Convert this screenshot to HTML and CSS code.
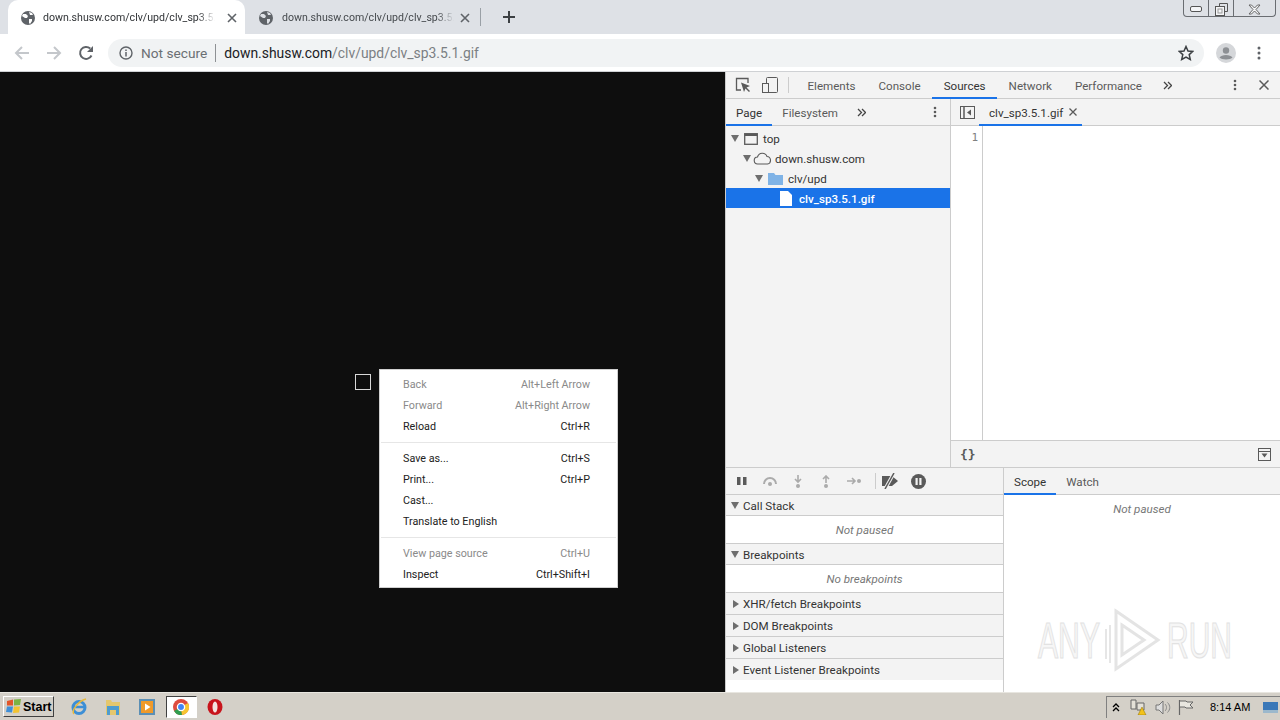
FILE: index.html
```html
<!DOCTYPE html>
<html lang="en">
<head>
    <meta charset="UTF-8">
    <title>clv_sp3.5.1.gif</title>
    <link rel="stylesheet" href="styles.css">
</head>
<body>

<div class="tabstrip">
    <div class="tab tab-active">
        <svg class="globe" width="14" height="14" viewBox="0 0 14 14"><circle cx="7" cy="7" r="7" fill="#5f6368"/><path d="M2 3l3 0 2 2-1 2-2 0-3-2zM8 8l3 0 0 2-2 3-1-1zM8 1l3 1 1 2-3 0z" fill="#fff"/></svg>
        <span class="tab-title">down.shusw.com/clv/upd/clv_sp3.5.1.gif</span>
        <svg class="tab-close" width="10" height="10" viewBox="0 0 10 10"><path d="M1 1l8 8M9 1l-8 8" stroke="#5f6368" stroke-width="1.6"/></svg>
    </div>
    <div class="tab">
        <svg class="globe" width="14" height="14" viewBox="0 0 14 14"><circle cx="7" cy="7" r="7" fill="#5f6368"/><path d="M2 3l3 0 2 2-1 2-2 0-3-2zM8 8l3 0 0 2-2 3-1-1zM8 1l3 1 1 2-3 0z" fill="#dee1e6"/></svg>
        <span class="tab-title">down.shusw.com/clv/upd/clv_sp3.5.1.gif</span>
        <svg class="tab-close" width="10" height="10" viewBox="0 0 10 10"><path d="M1 1l8 8M9 1l-8 8" stroke="#5f6368" stroke-width="1.6"/></svg>
    </div>
    <div class="tab-sep"></div>
    <svg class="new-tab" width="12" height="12" viewBox="0 0 12 12"><path d="M6 0v12M0 6h12" stroke="#3c4043" stroke-width="2"/></svg>
    <div class="win-controls">
        <div class="win-btn win-min"><svg width="12" height="7" viewBox="0 0 12 7"><rect x=".5" y=".5" width="11" height="5" rx="1.5" fill="#f4f5f7" stroke="#555"/></svg></div>
        <div class="win-btn win-max"><svg width="13" height="13" viewBox="0 0 13 13"><path d="M4.500 3V.5h8v8H10" fill="none" stroke="#555"/><rect x=".5" y="3.500" width="9" height="9" fill="#f4f5f7" stroke="#555"/><rect x="3" y="6" width="4" height="4" fill="none" stroke="#999"/></svg></div>
        <div class="win-btn win-close"><svg width="13" height="11" viewBox="0 0 13 11"><path d="M1 1h2.500l3 3 3-3H12L8 5.500l4 4.500H9.500l-3-3-3 3H1l4-4.500z" fill="#f4f5f7" stroke="#666"/></svg></div>
    </div>
</div>

<div class="toolbar">
    <svg class="tool-icon" width="16" height="16" viewBox="0 0 16 16"><path d="M15 8H2M8 2L2 8l6 6" fill="none" stroke="#c4c7cb" stroke-width="2"/></svg>
    <svg class="tool-icon" width="16" height="16" viewBox="0 0 16 16"><path d="M1 8h13M8 2l6 6-6 6" fill="none" stroke="#c4c7cb" stroke-width="2"/></svg>
    <svg class="tool-icon" width="16" height="16" viewBox="0 0 16 16"><path d="M13.500 10.500A6 6 0 1 1 12.200 3.500" fill="none" stroke="#5f6368" stroke-width="2"/><path d="M15 1v6H9z" fill="#5f6368"/></svg>
    <div class="omnibox">
        <svg class="info-icon" width="14" height="14" viewBox="0 0 14 14"><circle cx="7" cy="7" r="6" fill="none" stroke="#5f6368" stroke-width="1.400"/><path d="M7 6v4.500M7 3.500v1.500" stroke="#5f6368" stroke-width="1.500"/></svg>
        <span class="not-secure">Not secure</span>
        <span class="omni-sep"></span>
        <span class="url"><span class="url-host">down.shusw.com</span>/clv/upd/clv_sp3.5.1.gif</span>
        <svg class="star" width="16" height="16" viewBox="0 0 16 16"><path d="M8 1.500l2 4.500 4.800.4-3.600 3.200 1.100 4.800L8 12l-4.300 2.400 1.100-4.800L1.200 6.400 6 6z" fill="none" stroke="#3c4043" stroke-width="1.500"/></svg>
    </div>
    <svg class="avatar" width="20" height="20" viewBox="0 0 20 20"><circle cx="10" cy="10" r="10" fill="#d5d7da"/><circle cx="10" cy="7.500" r="3.200" fill="#8d9094"/><path d="M3.500 14.500c2-3.500 11-3.500 13 0-2 2.500-11 2.500-13 0z" fill="#8d9094"/></svg>
    <svg class="menu-dots" width="4" height="14" viewBox="0 0 4 14"><circle cx="2" cy="2" r="1.500" fill="#5f6368"/><circle cx="2" cy="7" r="1.500" fill="#5f6368"/><circle cx="2" cy="12" r="1.500" fill="#5f6368"/></svg>
</div>

<div class="main">
    <div class="viewer">
        <div class="broken-image"></div>
    </div>

    <div class="devtools">
        <div class="dt-mainbar">
            <svg class="dt-inspect" width="16" height="16" viewBox="0 0 16 16"><path d="M6 13H1.500V1.500H13V6" fill="none" stroke="#5a5a5a" stroke-width="1.300"/><path d="M6 5.500l9 3.500-3.500 1.500L15 14l-1 1-3.500-3.500L9 15z" fill="#5a5a5a"/></svg>
            <svg class="dt-device" width="16" height="16" viewBox="0 0 16 16"><rect x="4.500" y=".5" width="11" height="15" fill="none" stroke="#5a5a5a" rx="1"/><rect x=".5" y="6.500" width="6" height="9" fill="#f3f3f3" stroke="#5a5a5a"/></svg>
            <span class="dt-vsep"></span>
            <div class="dt-tabs">
                <span class="dt-tab">Elements</span>
                <span class="dt-tab">Console</span>
                <span class="dt-tab dt-tab-on">Sources</span>
                <span class="dt-tab">Network</span>
                <span class="dt-tab">Performance</span>
            </div>
            <svg class="chevrons" width="9" height="9" viewBox="0 0 9 9"><path d="M1 1l3.500 3.500L1 8M5 1l3.500 3.500L5 8" fill="none" stroke="#444" stroke-width="1.300"/></svg>
            <svg class="dt-kebab" width="4" height="12" viewBox="0 0 4 12"><circle cx="2" cy="2" r="1.300" fill="#5a5a5a"/><circle cx="2" cy="6" r="1.300" fill="#5a5a5a"/><circle cx="2" cy="10" r="1.300" fill="#5a5a5a"/></svg>
            <svg class="dt-close" width="10" height="10" viewBox="0 0 10 10"><path d="M.5.5l9 9M9.500.5l-9 9" stroke="#5a5a5a" stroke-width="1.500"/></svg>
        </div>

        <div class="dt-upper">
            <div class="navigator">
                <div class="subbar">
                    <span class="sub-tab sub-tab-on">Page</span>
                    <span class="sub-tab">Filesystem</span>
                    <svg class="chevrons" width="9" height="9" viewBox="0 0 9 9"><path d="M1 1l3.500 3.500L1 8M5 1l3.500 3.500L5 8" fill="none" stroke="#444" stroke-width="1.300"/></svg>
                    <svg class="nav-kebab" width="4" height="12" viewBox="0 0 4 12"><circle cx="2" cy="2" r="1.300" fill="#5a5a5a"/><circle cx="2" cy="6" r="1.300" fill="#5a5a5a"/><circle cx="2" cy="10" r="1.300" fill="#5a5a5a"/></svg>
                </div>
                <div class="tree">
                    <div class="tree-row">
                        <span class="arrow-down"></span>
                        <svg width="14" height="12" viewBox="0 0 14 12"><rect x=".7" y=".7" width="12.600" height="10.600" fill="none" stroke="#5a5a5a" stroke-width="1.300"/><path d="M.7 2h12.600" stroke="#5a5a5a" stroke-width="2"/></svg>
                        <span>top</span>
                    </div>
                    <div class="tree-row depth-1">
                        <span class="arrow-down"></span>
                        <svg class="cloud" width="20" height="13" viewBox="0 0 20 13"><path d="M5 12a3.500 3.500 0 0 1-.5-7 5 5 0 0 1 9.500-.5 3.800 3.800 0 0 1 .5 7.500z" fill="none" stroke="#5a5a5a" stroke-width="1.100"/></svg>
                        <span>down.shusw.com</span>
                    </div>
                    <div class="tree-row depth-2">
                        <span class="arrow-down"></span>
                        <svg class="folder" width="15" height="12" viewBox="0 0 15 12"><path d="M0 0h6l1.500 2H15v10H0z" fill="#7fb3e6"/></svg>
                        <span>clv/upd</span>
                    </div>
                    <div class="tree-row depth-3 tree-row-on">
                        <svg width="12" height="15" viewBox="0 0 12 15"><path d="M0 0h8l4 4v11H0z" fill="#fff"/></svg>
                        <span>clv_sp3.5.1.gif</span>
                    </div>
                </div>
            </div>
            <div class="editor">
                <div class="subbar editor-bar">
                    <svg class="panel-toggle" width="15" height="13" viewBox="0 0 15 13"><rect x=".5" y=".5" width="14" height="12" fill="none" stroke="#5a5a5a"/><path d="M4 0v13" stroke="#5a5a5a" stroke-width="1.500"/><path d="M11 3.500v6L7 6.500z" fill="#5a5a5a"/></svg>
                    <span class="file-tab">clv_sp3.5.1.gif<svg width="8" height="8" viewBox="0 0 8 8"><path d="M.5.5l7 7M7.500.5l-7 7" stroke="#5a5a5a" stroke-width="1.300"/></svg></span>
                </div>
                <div class="code">
                    <div class="gutter">1</div>
                </div>
                <div class="editor-foot">
                    <span class="pretty">{}</span>
                    <svg width="13" height="13" viewBox="0 0 13 13"><rect x=".5" y=".5" width="12" height="12" fill="none" stroke="#5a5a5a"/><path d="M1 3.500h11" stroke="#5a5a5a"/><path d="M3.500 5.500h6l-3 4z" fill="#5a5a5a"/></svg>
                </div>
            </div>
        </div>

        <div class="dt-lower">
            <div class="debug-left">
                <div class="debug-tools">
                    <span class="dbg-btn"><svg width="10" height="10" viewBox="0 0 10 10"><path d="M0 1h3.500v8H0zM6 1h3.500v8H6z" fill="#5a5a5a"/></svg></span>
                    <span class="dbg-btn"><svg width="16" height="10" viewBox="0 0 16 10"><path d="M2 8a6 6 0 0 1 12 0" fill="none" stroke="#ababab" stroke-width="2"/><circle cx="8" cy="8" r="2" fill="#ababab"/></svg></span>
                    <span class="dbg-btn"><svg width="8" height="13" viewBox="0 0 8 13"><path d="M4 0v6M1 4l3 3 3-3" fill="none" stroke="#ababab" stroke-width="1.600"/><circle cx="4" cy="11" r="2" fill="#ababab"/></svg></span>
                    <span class="dbg-btn"><svg width="8" height="13" viewBox="0 0 8 13"><path d="M4 8V2M1 4l3-3 3 3" fill="none" stroke="#ababab" stroke-width="1.600"/><circle cx="4" cy="11" r="2" fill="#ababab"/></svg></span>
                    <span class="dbg-btn"><svg width="14" height="8" viewBox="0 0 14 8"><path d="M0 4h7M5 1l3 3-3 3" fill="none" stroke="#ababab" stroke-width="1.600"/><circle cx="12" cy="4" r="2" fill="#ababab"/></svg></span>
                    <span class="dt-vsep"></span>
                    <span class="dbg-btn"><svg width="18" height="16" viewBox="0 0 18 16"><path d="M1 3h10l6 5-6 5H1z" fill="#5a5a5a"/><path d="M13 0L4 16" stroke="#f3f3f3" stroke-width="3.500"/><path d="M13 0L4 16" stroke="#5a5a5a" stroke-width="1.500"/></svg></span>
                    <span class="dbg-btn"><svg width="15" height="15" viewBox="0 0 15 15"><circle cx="7.500" cy="7.500" r="7.500" fill="#5a5a5a"/><path d="M4.500 4h2.200v7H4.500zM8.300 4h2.200v7H8.300z" fill="#f3f3f3"/></svg></span>
                </div>
                <div class="section-head"><span class="arrow-down"></span>Call Stack</div>
                <div class="section-note">Not paused</div>
                <div class="section-head"><span class="arrow-down"></span>Breakpoints</div>
                <div class="section-note">No breakpoints</div>
                <div class="section-head section-closed"><span class="arrow-right"></span>XHR/fetch Breakpoints</div>
                <div class="section-head section-closed"><span class="arrow-right"></span>DOM Breakpoints</div>
                <div class="section-head section-closed"><span class="arrow-right"></span>Global Listeners</div>
                <div class="section-head section-closed"><span class="arrow-right"></span>Event Listener Breakpoints</div>
            </div>
            <div class="debug-right">
                <div class="subbar scope-bar">
                    <span class="sub-tab sub-tab-on">Scope</span>
                    <span class="sub-tab">Watch</span>
                </div>
                <div class="scope-note">Not paused</div>
            </div>
        </div>
    </div>
</div>

<div class="context-menu">
    <div class="menu-row menu-off"><span>Back</span><span>Alt+Left Arrow</span></div>
    <div class="menu-row menu-off"><span>Forward</span><span>Alt+Right Arrow</span></div>
    <div class="menu-row"><span>Reload</span><span>Ctrl+R</span></div>
    <div class="menu-sep"></div>
    <div class="menu-row"><span>Save as...</span><span>Ctrl+S</span></div>
    <div class="menu-row"><span>Print...</span><span>Ctrl+P</span></div>
    <div class="menu-row"><span>Cast...</span></div>
    <div class="menu-row"><span>Translate to English</span></div>
    <div class="menu-sep"></div>
    <div class="menu-row menu-off"><span>View page source</span><span>Ctrl+U</span></div>
    <div class="menu-row"><span>Inspect</span><span>Ctrl+Shift+I</span></div>
</div>

<svg class="watermark" width="210" height="66" viewBox="0 0 210 66">
    <text x="1" y="51" class="wm-text" textLength="62" lengthAdjust="spacingAndGlyphs">ANY</text>
    <path d="M69 22v30M73 18v38" stroke="#e6e6e6" stroke-width="2" fill="none"/>
    <path d="M79 4l42 29-42 29zM85 18l22 15-22 15z" fill="none" stroke="#e4e4e4" stroke-width="3"/>
    <text x="130" y="51" class="wm-text" textLength="65" lengthAdjust="spacingAndGlyphs">RUN</text>
</svg>

<div class="taskbar">
    <div class="start-btn">
        <svg width="16" height="15" viewBox="0 0 16 15"><path d="M1 2l6-1.500v6L1 6.500z" fill="#e2562a"/><path d="M8 .5L15 0l-1 6-6 .5z" fill="#7cb342"/><path d="M1 7.500l6 0-1 6-6-.5z" fill="#3f8fd8"/><path d="M8 7.500l6 0-1 6-6 .5z" fill="#f3c32f"/></svg>
        <span>Start</span>
    </div>
    <div class="quick">
        <span class="quick-slot"><svg width="18" height="18" viewBox="0 0 18 18"><circle cx="9" cy="9.500" r="6" fill="none" stroke="#3d8fd6" stroke-width="3"/><path d="M3 9h12" stroke="#3d8fd6" stroke-width="2.500"/><path d="M4 16C1 13 8 3 16 1" fill="none" stroke="#e8b93c" stroke-width="1.500"/></svg></span>
        <span class="quick-slot"><svg width="18" height="16" viewBox="0 0 18 16"><path d="M2 1h5l1 2h8v13H2z" fill="#e5c76d"/><path d="M3 7h12v9h-3v-5H6v5H3z" fill="#4f9ccf"/></svg></span>
        <span class="quick-slot"><svg width="16" height="16" viewBox="0 0 16 16"><rect width="16" height="16" fill="#5b8fb5"/><rect x="2" y="2" width="12" height="12" fill="#f09a2a"/><path d="M6 4.500l5.500 3.500L6 11.500z" fill="#fff"/></svg></span>
        <span class="quick-slot"><span class="quick-on"><svg width="16" height="16" viewBox="0 0 16 16"><circle cx="8" cy="8" r="8" fill="#dd4b3e"/><path d="M8 8L1 12A8 8 0 0 0 9 16z" fill="#2f9e4f"/><path d="M8 8l7-4a8 8 0 0 1-6 12z" fill="#f7c531"/><circle cx="8" cy="8" r="3.600" fill="#4285f4" stroke="#fff" stroke-width="1.300"/></svg></span></span>
        <span class="quick-slot"><svg width="16" height="18" viewBox="0 0 16 18"><ellipse cx="8" cy="9" rx="7.500" ry="8" fill="#c8141c"/><ellipse cx="8" cy="9" rx="2.500" ry="5.500" fill="#f3e4e0"/></svg></span>
    </div>
    <div class="tray">
        <span class="tray-up">
            <svg width="8" height="9" viewBox="0 0 8 9"><path d="M1 4l3-3 3 3M1 8l3-3 3 3" fill="none" stroke="#000" stroke-width="1.300"/></svg>
        </span>
        <svg class="tray-net" width="18" height="16" viewBox="0 0 18 16"><path d="M1 1h5v9H1zM7 4h7v7H7z" fill="#e4e1d8" stroke="#666"/><path d="M8 16l4-8 4 8z" fill="#f2c21b" stroke="#8a6d00" stroke-width=".5"/></svg>
        <svg width="16" height="15" viewBox="0 0 16 15"><path d="M1 5h3l4-4v13l-4-4H1z" fill="#ddd" stroke="#777"/><path d="M10 4c2 2 2 5 0 7M12.500 2.500c3 3 3 7 0 10" fill="none" stroke="#888"/></svg>
        <svg width="16" height="16" viewBox="0 0 16 16"><path d="M1.500 1v15" stroke="#666" stroke-width="1.200"/><path d="M2 2h6l1 1h6l-3 3 3 3H8L7 8H2" fill="#e8e6df" stroke="#666"/></svg>
        <span class="clock">8:14 AM</span>
        <svg class="show-desktop" width="15" height="11" viewBox="0 0 15 11"><rect width="15" height="11" fill="#3a78b8"/><rect y="8" width="15" height="3" fill="#9cb8cc"/></svg>
    </div>
</div>

</body>
</html>
```

FILE: styles.css
```css
* {
    box-sizing: border-box;
}
body {
    margin: 0;
    width: 1280px;
    height: 720px;
    overflow: hidden;
    position: relative;
    font-family: Roboto, "Open Sans", sans-serif;
    font-size: 11.600px;
    color: #333;
    display: flex;
    flex-direction: column;
    background: #fff;
}

/* browser tabs */
.tabstrip {
    height: 34px;
    flex: none;
    background: #dee1e6;
    display: flex;
    align-items: stretch;
    padding-left: 8px;
}
.tab {
    width: 237px;
    display: flex;
    align-items: center;
    padding-left: 13px;
    padding-top: 1px;
    color: #45494d;
}
.tab-active {
    background: #fff;
    border-radius: 10px 10px 0 0;
    color: #303336;
}
.tab + .tab {
    width: 235px;
    padding-left: 14px;
}
.tab-title {
    width: 172px;
    flex: none;
    margin-left: 8px;
    margin-right: 12px;
    white-space: nowrap;
    overflow: hidden;
    font-size: 10.600px;
    -webkit-mask-image: linear-gradient(to right, #000 90%, transparent);
    mask-image: linear-gradient(to right, #000 90%, transparent);
}
.tab + .tab .tab-title {
    margin-left: 9px;
    margin-right: 6px;
}
.tab-sep {
    width: 1px;
    height: 18px;
    background: #9aa0a6;
    align-self: center;
}
.new-tab {
    align-self: center;
    margin-left: 22px;
}
.win-controls {
    margin-left: auto;
    margin-right: 4px;
    height: 17px;
    width: 93px;
    display: flex;
    border: 1px solid #6a6d72;
    border-top: 0;
    border-radius: 0 0 4px 4px;
}
.win-btn {
    display: flex;
    align-items: center;
    justify-content: center;
    border-right: 1px solid #6a6d72;
    padding-top: 2px;
}
.win-min, .win-max {
    width: 25px;
}
.win-close {
    flex: 1;
    border-right: 0;
}

/* address bar */
.toolbar {
    height: 38px;
    flex: none;
    display: flex;
    align-items: center;
    padding-left: 14px;
    gap: 16px;
    background: #fff;
    border-bottom: 1px solid #cfd1d4;
}
.omnibox {
    width: 1096px;
    height: 28px;
    margin-left: -2px;
    border-radius: 14px;
    background: #f1f3f4;
    display: flex;
    align-items: center;
    padding-left: 11px;
    padding-right: 10px;
}
.not-secure {
    margin-left: 8px;
    font-size: 13.700px;
    color: #6b6f73;
}
.omni-sep {
    width: 1px;
    height: 18px;
    background: #8e9194;
    margin: 0 8px;
}
.url {
    font-size: 13.900px;
    color: #7b7f83;
    white-space: nowrap;
}
.url-host {
    color: #202124;
}
.star {
    margin-left: auto;
}
.avatar {
    margin-left: -4px;
}
.menu-dots {
    margin-left: 5px;
}

/* page area */
.main {
    flex: 1;
    min-height: 0;
    display: flex;
}
.viewer {
    width: 725px;
    background: #0e0e0e;
    display: flex;
    align-items: center;
    justify-content: center;
}
.broken-image {
    width: 16px;
    height: 16px;
    border: 1px solid #d8d8d8;
}

/* devtools */
.devtools {
    flex: 1;
    display: flex;
    flex-direction: column;
    border-left: 1px solid #ccc;
    background: #fff;
    color: #5a5a5a;
}
.dt-mainbar {
    height: 27px;
    flex: none;
    display: flex;
    align-items: center;
    padding-left: 9px;
    background: #f3f3f3;
    border-bottom: 1px solid #ccc;
}
.dt-device {
    margin-left: 11px;
}
.dt-vsep {
    width: 1px;
    height: 16px;
    background: #ccc;
    margin-left: 10px;
}
.dt-tabs {
    display: flex;
    margin-left: 7px;
    align-self: stretch;
}
.dt-tab {
    padding: 0 11.500px;
    line-height: 28px;
    height: 27px;
    white-space: nowrap;
}
.dt-tab-on {
    color: #333;
    border-bottom: 2px solid #1a73e8;
}
.chevrons {
    margin-left: 9px;
    flex: none;
}
.dt-kebab {
    margin-left: auto;
}
.dt-close {
    margin-left: 22px;
    margin-right: 11px;
}
.dt-upper {
    height: 369px;
    flex: none;
    display: flex;
    border-bottom: 1px solid #ccc;
}
.navigator {
    width: 225px;
    flex: none;
    background: #f3f3f3;
    border-right: 1px solid #ccc;
}
.subbar {
    height: 27px;
    display: flex;
    align-items: center;
    background: #f3f3f3;
    border-bottom: 1px solid #ccc;
}
.sub-tab {
    padding: 0 10px;
    line-height: 28px;
    height: 26px;
    align-self: flex-start;
}
.sub-tab-on {
    color: #333;
    border-bottom: 2px solid #1a73e8;
    height: 27px;
}
.nav-kebab {
    margin-left: auto;
    margin-right: 13px;
}
.tree {
    padding-top: 2px;
}
.tree-row {
    height: 20px;
    display: flex;
    align-items: center;
    gap: 5px;
    padding-left: 5px;
    padding-top: 1px;
    color: #333;
}
.depth-1 {
    padding-left: 17px;
}
.cloud {
    margin-left: -3px;
    margin-right: -3px;
}
.depth-2 {
    padding-left: 29px;
}
.depth-3 {
    padding-left: 54px;
    gap: 7px;
}
.tree-row-on {
    background: #1a73e8;
    color: #fff;
    font-weight: 500;
}
.arrow-down {
    width: 0;
    height: 0;
    border-left: 4.500px solid transparent;
    border-right: 4.500px solid transparent;
    border-top: 7px solid #6e6e6e;
}
.arrow-right {
    width: 0;
    height: 0;
    border-top: 4px solid transparent;
    border-bottom: 4px solid transparent;
    border-left: 6px solid #6e6e6e;
}
.editor {
    flex: 1;
    display: flex;
    flex-direction: column;
}
.panel-toggle {
    margin-left: 9px;
}
.file-tab {
    margin-left: 4px;
    padding: 0 5px 0 10px;
    height: 27px;
    line-height: 28px;
    align-self: flex-start;
    color: #333;
    border-bottom: 2px solid #1a73e8;
}
.file-tab svg {
    margin-left: 6px;
    vertical-align: 1px;
}
.code {
    flex: 1;
    display: flex;
}
.gutter {
    width: 32px;
    border-right: 1px solid #ccc;
    text-align: right;
    padding: 5px 4px 0 0;
    font-family: "DejaVu Sans Mono", monospace;
    font-size: 11px;
    color: #808080;
    background: #fff;
}
.editor-foot {
    height: 27px;
    flex: none;
    display: flex;
    align-items: center;
    justify-content: space-between;
    padding: 0 9px;
    background: #f3f3f3;
    border-top: 1px solid #ccc;
}
.pretty {
    font-weight: 700;
    font-family: "DejaVu Sans Mono", monospace;
    font-size: 13px;
}
.dt-lower {
    flex: 1;
    display: flex;
    min-height: 0;
}
.debug-left {
    width: 278px;
    flex: none;
    border-right: 1px solid #ccc;
    background: #fff;
}
.debug-tools {
    height: 27px;
    display: flex;
    align-items: center;
    padding-left: 2px;
    background: #f3f3f3;
    border-bottom: 1px solid #ccc;
}
.dbg-btn {
    width: 28px;
    flex: none;
    display: flex;
    align-items: center;
    justify-content: center;
}
.debug-tools .dt-vsep {
    margin-left: 7px;
}
.section-head {
    height: 21px;
    display: flex;
    align-items: center;
    gap: 4px;
    padding-left: 5px;
    padding-top: 1px;
    background: #f3f3f3;
    border-bottom: 1px solid #ccc;
    color: #333;
}
.section-closed {
    height: 22px;
    padding-left: 7px;
    padding-top: 0;
    gap: 4px;
}
.section-closed:last-child {
    height: 21px;
    border-bottom: 0;
}
.section-note {
    height: 28px;
    display: flex;
    align-items: center;
    justify-content: center;
    font-style: italic;
    color: #777;
    border-bottom: 1px solid #ccc;
}
.debug-right {
    flex: 1;
}
.scope-note {
    text-align: center;
    font-style: italic;
    color: #777;
    padding-top: 7px;
}

/* right click menu */
.context-menu {
    position: absolute;
    left: 379px;
    top: 369px;
    width: 239px;
    height: 219px;
    padding: 4px 1px;
    background: #fff;
    border: 1px solid #d0d0d0;
    font-size: 10.750px;
    color: #222;
}
.menu-row {
    height: 21px;
    display: flex;
    align-items: center;
    justify-content: space-between;
    padding: 0 26px 0 22px;
}
.menu-off {
    color: #8a8a8a;
}
.menu-sep {
    height: 1px;
    background: #e6e6e6;
    margin: 5px 0;
}

.watermark {
    position: absolute;
    left: 1037px;
    top: 607px;
    overflow: visible;
}
.wm-text {
    font-family: "Liberation Sans", sans-serif;
    font-size: 50px;
    fill: #f6f6f6;
    stroke: #e2e2e2;
    stroke-width: 1.200;
}

/* windows taskbar */
.taskbar {
    height: 28px;
    flex: none;
    display: flex;
    align-items: center;
    background: #d4d0c8;
    border-top: 1px solid #e8e6e0;
    font-family: "Liberation Sans", sans-serif;
    color: #000;
}
.start-btn {
    width: 51px;
    height: 21px;
    margin-left: 3px;
    display: flex;
    align-items: center;
    gap: 1px;
    padding-left: 2px;
    font-size: 12.500px;
    font-weight: 700;
    background: #d4d0c8;
    border: 1px solid;
    border-color: #fff #404040 #404040 #fff;
}
.quick {
    display: flex;
    align-items: center;
    margin-left: 8px;
}
.quick-slot {
    width: 34px;
    display: flex;
    align-items: center;
    justify-content: center;
}
.quick-on {
    width: 31px;
    height: 22px;
    display: flex;
    align-items: center;
    justify-content: center;
    background: #fff;
    border: 1px solid;
    border-color: #404040 #fff #fff #404040;
}
.tray {
    margin-left: auto;
    height: 22px;
    width: 174px;
    display: flex;
    align-items: center;
    gap: 7px;
    padding-left: 5px;
    border-top: 1px solid #808080;
    border-left: 1px solid #808080;
}
.tray-up {
    display: flex;
    margin-right: 3px;
}
.clock {
    font-size: 11px;
    margin-left: 9px;
    white-space: nowrap;
}
.show-desktop {
    margin-left: 6px;
}
```
